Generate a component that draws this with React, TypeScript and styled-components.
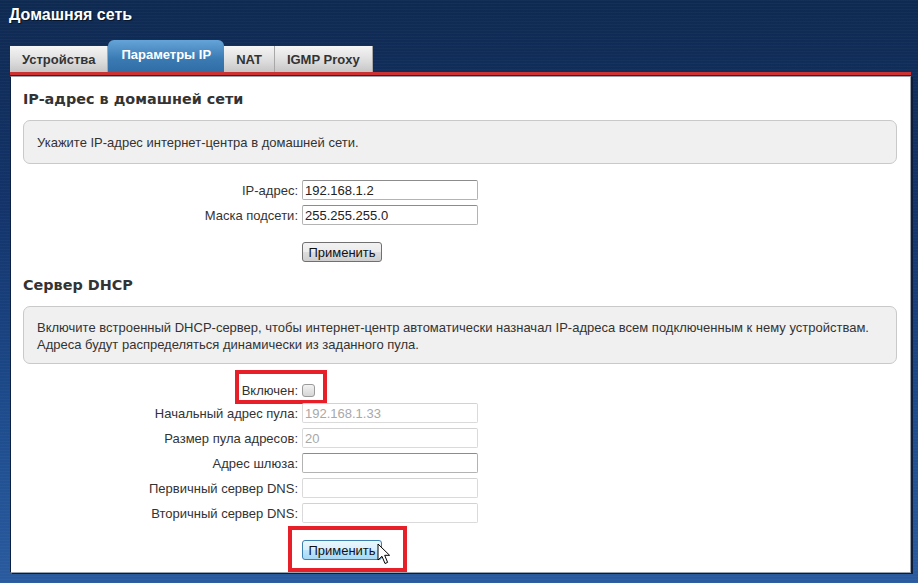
import React from 'react'
import styled, { createGlobalStyle } from 'styled-components'

const GlobalStyle = createGlobalStyle`
    body {
        margin: 0;
        font-family: "Liberation Sans", Arial, sans-serif;
    }
`

const Screen = styled.div`
    width: 918px;
    height: 583px;
    overflow: hidden;
    background:
        repeating-linear-gradient(0deg, rgba(255,255,255,0.025) 0 1px, transparent 1px 3px),
        linear-gradient(to bottom, #0f2a51 0%, #13336a 35%, #1d4b8c 70%, #2a5b9f 100%);
`

const Header = styled.h1`
    margin: 0;
    height: 40px;
    padding: 6px 0 0 9px;
    box-sizing: border-box;
    font: bold 16px "Liberation Sans", Arial, sans-serif;
    color: #fff;
    text-shadow: 1px 1px 1px rgba(0,0,0,0.6);
`

const TabBar = styled.div`
    display: flex;
    align-items: flex-end;
    height: 32px;
    margin: 0 7px 0 10px;
    border-bottom: 3px solid #cd3232;
    box-shadow: 0 1px 0 #5a1616;
`

const Tab = styled.div<{ $active?: boolean }>`
    display: flex;
    align-items: center;
    justify-content: center;
    box-sizing: border-box;
    height: ${p => (p.$active ? '32px' : '26px')};
    padding: ${p => (p.$active ? '0 13px 4px' : '0 12px')};
    font: bold 13px "Liberation Sans", Arial, sans-serif;
    color: ${p => (p.$active ? '#fff' : '#333')};
    background: ${p => (p.$active
        ? 'linear-gradient(to bottom, #64a4d8, #3a7ab3 60%, #2f6da6)'
        : 'linear-gradient(to bottom, #f5f5f5, #dcdcdc 60%, #c6c6c6)')};
    border-right: ${p => (p.$active ? 'none' : '1px solid #a8a8a8')};
    border-radius: ${p => (p.$active ? '6px 6px 0 0' : '0')};
`

const Panel = styled.div`
    margin: 1px 7px 0 10px;
    padding: 12px 13px 12px 12px;
    background: #fff;
    border: 1px solid #9aa3ae;
    border-left-color: #0c2142;
    box-shadow: 2px 1px 0 #0b1d38;
    font-size: 13px;
    color: #333;
`

const SectionTitle = styled.h2`
    margin: 0 0 11px;
    height: 20px;
    font: bold 14.4px/20px "DejaVu Sans", Verdana, sans-serif;
    color: #333;
`

const InfoBox = styled.div<{ $single?: boolean }>`
    padding: ${p => (p.$single ? '13px 13px 12px' : '12px 13px 10px')};
    background: #f0f0f0;
    border: 1px solid #c9c9c9;
    border-radius: 7px;
    font-size: 13px;
    line-height: 17px;
    color: #333;
`

const Form = styled.div<{ $top: number }>`
    display: flex;
    flex-direction: column;
    gap: 5px;
    margin-top: ${p => p.$top}px;
`

const Row = styled.div`
    position: relative;
    display: grid;
    grid-template-columns: 275px 176px;
    column-gap: 4px;
    align-items: center;
    height: 20px;
`

const CheckRow = styled(Row)`
    align-items: end;
`

const ButtonRow = styled(Row)<{ $last?: boolean }>`
    margin-top: 12px;
    margin-bottom: ${p => (p.$last ? '0' : '13px')};
`

const Label = styled.label`
    text-align: right;
    white-space: nowrap;
    font-size: 13px;
    color: #333;
`

const Field = styled.input<{ $dim?: boolean }>`
    box-sizing: border-box;
    width: 176px;
    height: 20px;
    margin: 0;
    padding: 0 2px;
    font: 13px "Liberation Sans", Arial, sans-serif;
    color: ${p => (p.$dim ? '#a8a8a8' : '#222')};
    background: #fff;
    border: 1px solid ${p => (p.$dim ? '#dadada' : '#b3b3b3')};
    border-top-color: ${p => (p.$dim ? '#d2d2d2' : '#8c8c8c')};
    border-radius: 2px;
    outline: none;
`

const Check = styled.span`
    display: block;
    width: 11px;
    height: 11px;
    margin-bottom: 1px;
    border: 1px solid #9a9a9a;
    border-radius: 3px;
    background: linear-gradient(to bottom, #f2f2f2, #d6d6d6);
`

const Button = styled.button<{ $hover?: boolean }>`
    width: 80px;
    height: 20px;
    padding: 0;
    font: 13px "Liberation Sans", Arial, sans-serif;
    color: #111;
    border: 1px solid ${p => (p.$hover ? '#3c7fb1' : '#707070')};
    border-radius: 3px;
    background: ${p => (p.$hover
        ? 'linear-gradient(to bottom, #eaf6fd, #d9f0fc 50%, #bee6fd 51%, #a7d9f5)'
        : 'linear-gradient(to bottom, #f2f2f2, #ebebeb 50%, #dddddd 51%, #cfcfcf)')};
`

const Highlight = styled.div<{ $left: number; $top: number; $w: number; $h: number }>`
    position: absolute;
    left: ${p => p.$left}px;
    top: ${p => p.$top}px;
    width: ${p => p.$w}px;
    height: ${p => p.$h}px;
    box-sizing: border-box;
    border: 4px solid #e61f28;
    pointer-events: none;
`

const Cursor = styled.svg`
    position: absolute;
    left: 354px;
    top: 3px;
`

const ButtonCell = styled.div`
    position: relative;
`

export default function App() {
    return (
        <Screen>
            <GlobalStyle />
            <Header>Домашняя сеть</Header>
            <TabBar>
                <Tab>Устройства</Tab>
                <Tab $active>Параметры IP</Tab>
                <Tab>NAT</Tab>
                <Tab>IGMP Proxy</Tab>
            </TabBar>
            <Panel>
                <SectionTitle>IP-адрес в домашней сети</SectionTitle>
                <InfoBox $single>Укажите IP-адрес интернет-центра в домашней сети.</InfoBox>
                <Form $top={16}>
                    <Row>
                        <Label>IP-адрес:</Label>
                        <Field defaultValue="192.168.1.2" />
                    </Row>
                    <Row>
                        <Label>Маска подсети:</Label>
                        <Field defaultValue="255.255.255.0" />
                    </Row>
                    <ButtonRow>
                        <span />
                        <Button>Применить</Button>
                    </ButtonRow>
                </Form>

                <SectionTitle>Сервер DHCP</SectionTitle>
                <InfoBox>
                    Включите встроенный DHCP-сервер, чтобы интернет-центр автоматически назначал IP-адреса всем подключенным к нему устройствам.
                    <br />
                    Адреса будут распределяться динамически из заданного пула.
                </InfoBox>
                <Form $top={14}>
                    <CheckRow>
                        <Label>Включен:</Label>
                        <Check />
                        <Highlight $left={212} $top={-8} $w={92} $h={34} />
                    </CheckRow>
                    <Row>
                        <Label>Начальный адрес пула:</Label>
                        <Field $dim defaultValue="192.168.1.33" />
                    </Row>
                    <Row>
                        <Label>Размер пула адресов:</Label>
                        <Field $dim defaultValue="20" />
                    </Row>
                    <Row>
                        <Label>Адрес шлюза:</Label>
                        <Field defaultValue="" />
                    </Row>
                    <Row>
                        <Label>Первичный сервер DNS:</Label>
                        <Field $dim defaultValue="" />
                    </Row>
                    <Row>
                        <Label>Вторичный сервер DNS:</Label>
                        <Field $dim defaultValue="" />
                    </Row>
                    <ButtonRow $last>
                        <span />
                        <ButtonCell>
                            <Button $hover>Применить</Button>
                        </ButtonCell>
                        <Highlight $left={265} $top={-14} $w={119} $h={46} />
                        <Cursor width="14" height="22" viewBox="0 0 14 22">
                            <path
                                d="M1 1 L1 17 L5 13.3 L8 20.5 L10.6 19.4 L7.7 12.3 L12.6 12.3 Z"
                                fill="#fff"
                                stroke="#000"
                                strokeWidth="1"
                                strokeLinejoin="round"
                            />
                        </Cursor>
                    </ButtonRow>
                </Form>
            </Panel>
        </Screen>
    )
}
